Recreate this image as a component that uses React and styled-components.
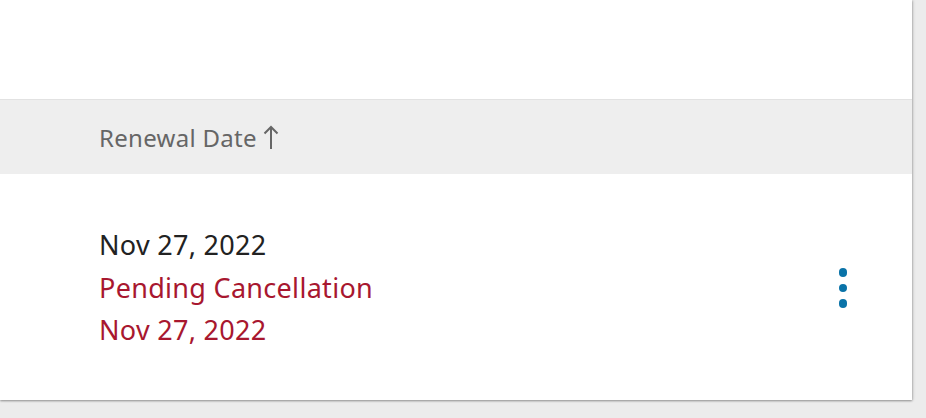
import React from "react";
import styled, { createGlobalStyle } from "styled-components";

const GlobalStyle = createGlobalStyle`
  html, body {
    margin: 0;
    padding: 0;
    background: #ececec;
  }
  body {
    font-family: "Noto Sans", "Open Sans", sans-serif;
    overflow: hidden;
  }
`;

const Page = styled.main`
  width: 926px;
  height: 418px;
  overflow: hidden;
`;

const Card = styled.section`
  width: 912px;
  background: #fff;
  box-shadow: 0 1px 2px rgba(0, 0, 0, 0.35), 1px 0 3px rgba(0, 0, 0, 0.15);
`;

const CardTop = styled.div`
  height: 99px;
`;

const HeaderRow = styled.div`
  display: flex;
  align-items: center;
  height: 74px;
  padding-left: 99px;
  background: #eeeeee;
  border-top: 1px solid #e2e2e2;
`;

const HeaderCell = styled.button`
  display: inline-flex;
  align-items: center;
  gap: 6px;
  border: none;
  background: none;
  padding: 0;
  font-family: inherit;
  font-size: 24px;
  letter-spacing: 0.3px;
  color: #666;
  cursor: pointer;
`;

const Row = styled.div`
  display: flex;
  align-items: center;
  justify-content: space-between;
  height: 226px;
  padding: 0 61px 0 99px;
`;

const DateStack = styled.div`
  display: flex;
  flex-direction: column;
  padding-top: 2px;
`;

const Line = styled.span`
  font-size: 27px;
  line-height: 42.5px;
  color: ${(p) => (p.$alert ? "#a8172f" : "#222")};
  letter-spacing: 0.3px;
`;

const MenuButton = styled.button`
  display: flex;
  flex-direction: column;
  align-items: center;
  gap: 7px;
  border: none;
  background: none;
  padding: 4px;
  margin-top: 2px;
  cursor: pointer;
`;

const Dot = styled.span`
  width: 8.5px;
  height: 8.5px;
  border-radius: 50%;
  background: #0a73a8;
`;

const ArrowUp = () => (
  <svg width="16" height="25" viewBox="0 0 16 25" fill="none">
    <path d="M8 24V2M1.5 8.5L8 2l6.5 6.5" stroke="#666" strokeWidth="2" />
  </svg>
);

export default function App() {
  return (
    <Page>
      <GlobalStyle />
      <Card>
        <CardTop />
        <HeaderRow>
          <HeaderCell>
            Renewal Date
            <ArrowUp />
          </HeaderCell>
        </HeaderRow>
        <Row>
          <DateStack>
            <Line>Nov 27, 2022</Line>
            <Line $alert>Pending Cancellation</Line>
            <Line $alert>Nov 27, 2022</Line>
          </DateStack>
          <MenuButton aria-label="More actions">
            <Dot />
            <Dot />
            <Dot />
          </MenuButton>
        </Row>
      </Card>
    </Page>
  );
}
